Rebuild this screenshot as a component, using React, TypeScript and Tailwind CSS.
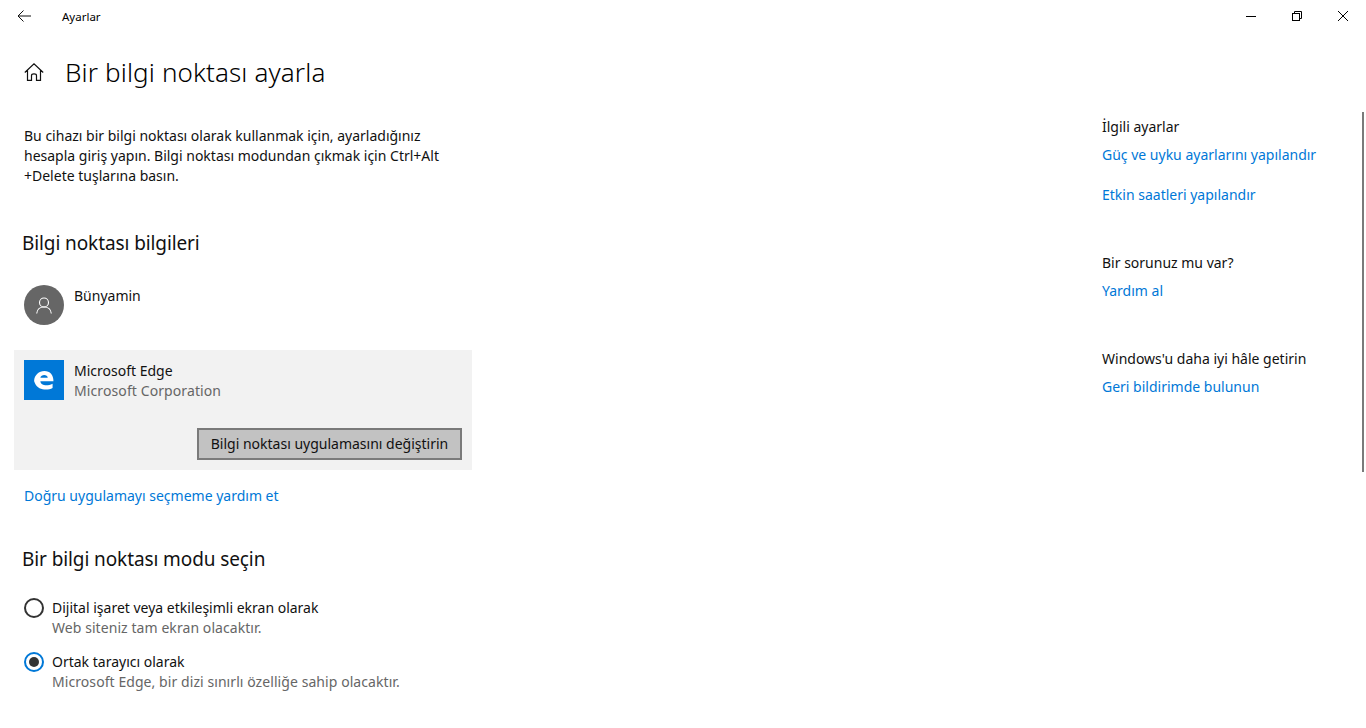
const font = { fontFamily: '"Noto Sans", sans-serif' };

function RelatedGroup({ title, links, className }: { title: string; links: string[]; className?: string }) {
  return (
    <div className={className}>
      <div className="text-[14px] leading-[20px] text-[#111111]">{title}</div>
      {links.map((l, i) => (
        <div key={l} className={`text-[14px] leading-[20px] text-[#0078d7] ${i === 0 ? 'mt-[8px]' : 'mt-[20px]'}`}>{l}</div>
      ))}
    </div>
  );
}

function Radio({ checked, label, hint, className }: { checked?: boolean; label: string; hint: string; className?: string }) {
  return (
    <div className={`flex ${className ?? ''}`}>
      <div className={`flex h-[20px] w-[20px] items-center justify-center rounded-full border-2 ${checked ? 'border-[#0078d7]' : 'border-[#333333]'}`}>
        {checked && <div className="h-[10px] w-[10px] rounded-full bg-[#333333]" />}
      </div>
      <div className="ml-[8px]">
        <div className="text-[14px] leading-[20px] text-[#111111]">{label}</div>
        <div className="text-[14px] leading-[20px] tracking-[0.07px] text-[#666666]">{hint}</div>
      </div>
    </div>
  );
}

export default function App() {
  return (
    <div className="relative h-[728px] w-[1366px] overflow-hidden bg-white" style={font}>
      <div className="flex h-[32px] items-center">
        <div className="flex w-[48px] justify-center">
          <svg width="14" height="12" viewBox="0 0 14 12" fill="none" stroke="#111" strokeWidth="1">
            <path d="M14 6H1M6.500 0.500L1 6L6.500 11.500" />
          </svg>
        </div>
        <div className="mt-[2px] ml-[14px] text-[11.500px] text-black">Ayarlar</div>
        <div className="ml-auto flex h-full items-center">
          <div className="flex h-full w-[46px] items-center justify-center">
            <div className="h-px w-[10px] bg-black" />
          </div>
          <div className="flex h-full w-[46px] items-center justify-center">
            <svg width="10" height="10" viewBox="0 0 10 10" fill="none" stroke="black" strokeWidth="1">
              <rect x="0.500" y="2.500" width="7" height="7" />
              <path d="M2.500 2.500V0.500H9.500V7.500H7.500" />
            </svg>
          </div>
          <div className="flex h-full w-[46px] items-center justify-center">
            <svg width="10" height="10" viewBox="0 0 10 10" fill="none" stroke="black" strokeWidth="1">
              <path d="M0 0L10 10M10 0L0 10" />
            </svg>
          </div>
        </div>
      </div>

      <div className="flex">
        <div className="w-[1102px] shrink-0 pl-[24px]">
          <div className="mt-[18px] flex h-[44px] items-center">
            <svg width="20" height="18" viewBox="0 0 20 18" fill="none" stroke="#111" strokeWidth="1.200">
              <path d="M0.800 9.500L10 0.900L19.200 9.500M3.500 7.500V17.400H7.500V12.500Q7.500 10.800 10 10.800Q12.500 10.800 12.500 12.500V17.400H16.500V7.500" />
            </svg>
            <h1 className="ml-[21px] text-[26px] leading-[44px] font-light tracking-[0.13px] text-black">Bir bilgi noktası ayarla</h1>
          </div>

          <p className="mt-[32px] w-[430px] text-[14px] leading-[20px] text-[#111111]">
            Bu cihazı bir bilgi noktası olarak kullanmak için, ayarladığınız
            <br />
            hesapla giriş yapın. Bilgi noktası modundan çıkmak için Ctrl+Alt
            <br />
            +Delete tuşlarına basın.
          </p>

          <h2 className="mt-[43px] -ml-[2px] text-[19px] leading-[28px] font-normal tracking-[-0.1px] text-[#111111]">Bilgi noktası bilgileri</h2>

          <div className="mt-[28px] flex">
            <div className="flex h-[40px] w-[40px] items-center justify-center rounded-full bg-[#666666]">
              <svg width="16" height="17" viewBox="0 0 16 17" fill="none" stroke="white" strokeWidth="1.100">
                <circle cx="8" cy="5.500" r="4.500" />
                <path d="M0.700 16.500C1 12.500 4 10 8 10C12 10 15 12.500 15.300 16.500" />
              </svg>
            </div>
            <div className="ml-[10px] -mt-[1px] text-[14px] leading-[24px] text-[#111111]">Bünyamin</div>
          </div>

          <div className="mt-[25px] -ml-[10px] h-[120px] w-[458px] bg-[#f2f2f2] pt-[10px] pr-[10px] pl-[10px]">
            <div className="flex">
              <div className="flex h-[40px] w-[40px] items-center justify-center bg-[#0078d7]">
                <svg width="22" height="22" viewBox="0 0 20 20">
                  <path fill="white" d="M1 10.800C1.300 5.400 5.500 1.800 10.300 1.800c5.300 0 8.300 3.700 8.300 9.300H6.700c0.300 3.800 6 4.900 11.100 2.200v4c-5 2.600-13.400 1.700-15.900-4.200-0.500-1-0.800-1.700-0.900-2.300zM6.700 7.900h6.700c-0.100-3.200-6.100-3.300-6.700 0z" />
                </svg>
              </div>
              <div className="mt-[1px] ml-[10px]">
                <div className="text-[14px] leading-[20px] text-[#111111]">Microsoft Edge</div>
                <div className="text-[14px] leading-[20px] tracking-[0.1px] text-[#666666]">Microsoft Corporation</div>
              </div>
            </div>
            <div className="mt-[27px] flex justify-end">
              <button className="h-[32px] w-[265px] border-2 border-[#7a7a7a] bg-[#c2c2c2] text-[14px] leading-[20px] text-[#111111]">
                Bilgi noktası uygulamasını değiştirin
              </button>
            </div>
          </div>

          <div className="mt-[16px] text-[14px] leading-[20px] text-[#0078d7]">Doğru uygulamayı seçmeme yardım et</div>

          <h2 className="mt-[39px] -ml-[2px] text-[19px] leading-[28px] font-normal tracking-[-0.1px] text-[#111111]">Bir bilgi noktası modu seçin</h2>

          <Radio className="mt-[25px]" label="Dijital işaret veya etkileşimli ekran olarak" hint="Web siteniz tam ekran olacaktır." />
          <Radio className="mt-[14px]" checked label="Ortak tarayıcı olarak" hint="Microsoft Edge, bir dizi sınırlı özelliğe sahip olacaktır." />
        </div>

        <div className="flex-1 pt-[85px]">
          <RelatedGroup title="İlgili ayarlar" links={['Güç ve uyku ayarlarını yapılandır', 'Etkin saatleri yapılandır']} />
          <RelatedGroup className="mt-[48px]" title="Bir sorunuz mu var?" links={['Yardım al']} />
          <RelatedGroup className="mt-[48px]" title="Windows'u daha iyi hâle getirin" links={['Geri bildirimde bulunun']} />
        </div>
      </div>

      <div className="absolute top-[112px] right-[2px] h-[360px] w-[2px] bg-[#7a7a7a]" />
    </div>
  );
}
